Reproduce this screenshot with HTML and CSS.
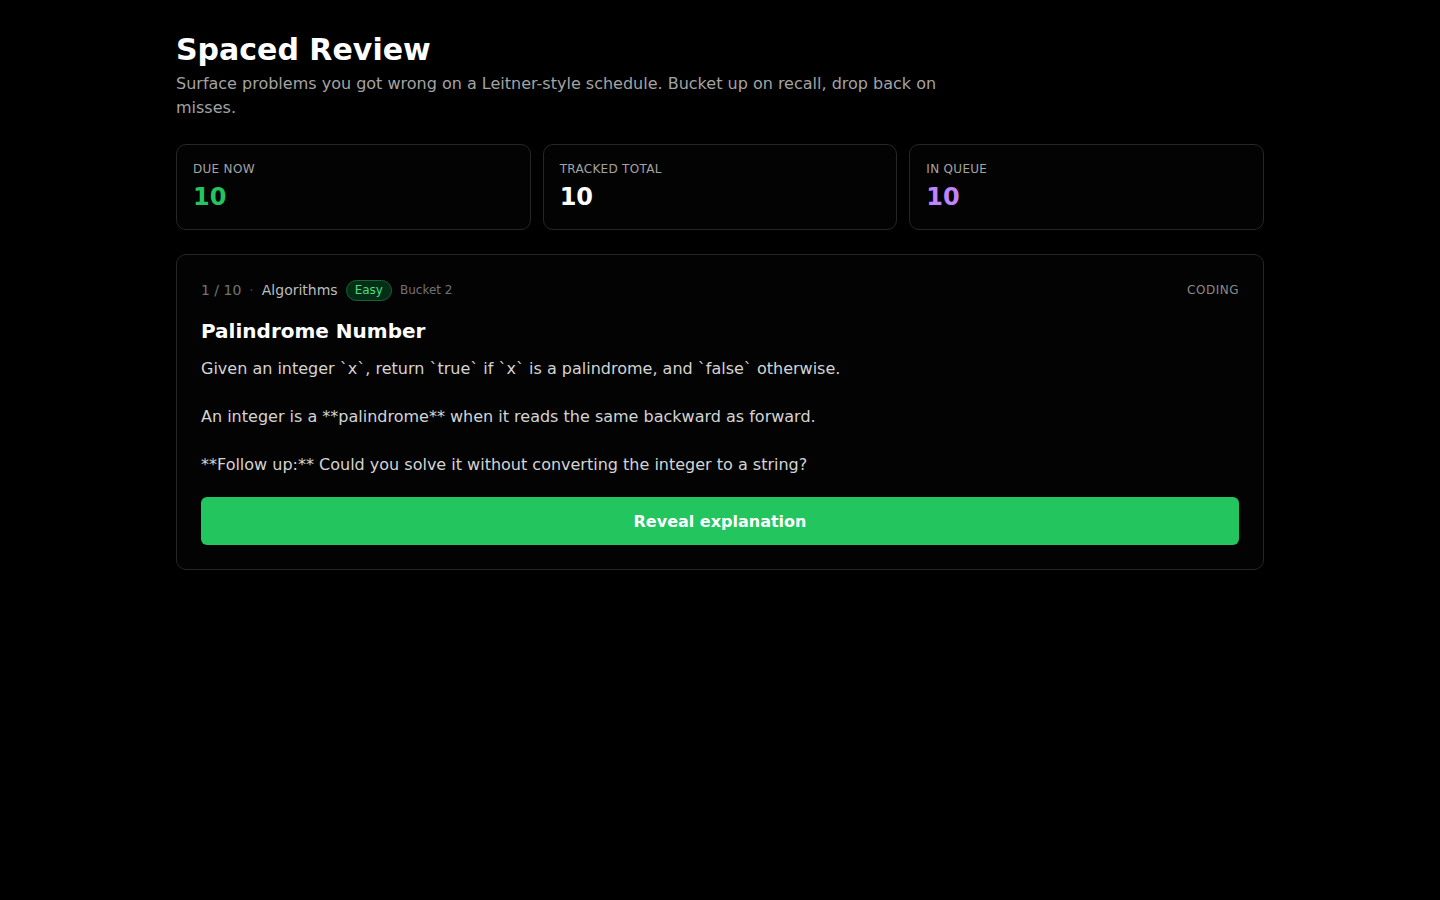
FILE: index.html
```html
<!DOCTYPE html>
<html lang="en">
<head>
    <meta charset="UTF-8">
    <meta name="viewport" content="width=device-width, initial-scale=1.0">
    <title>Spaced Review</title>
    <link rel="stylesheet" href="styles.css">
</head>
<body>

    <div class="page">
        <h1>Spaced Review</h1>
        <p class="intro">Surface problems you got wrong on a Leitner-style schedule. Bucket up on recall, drop back on misses.</p>

        <!-- compteurs -->
        <div class="stats">
            <div class="stat">
                <div class="stat-label">Due now</div>
                <div class="stat-value green">10</div>
            </div>
            <div class="stat">
                <div class="stat-label">Tracked total</div>
                <div class="stat-value">10</div>
            </div>
            <div class="stat">
                <div class="stat-label">In queue</div>
                <div class="stat-value purple">10</div>
            </div>
        </div>

        <div class="card">
            <div class="meta">
                <div class="meta-left">
                    <span class="counter">1 / 10</span>
                    <span class="dot">·</span>
                    <span class="topic">Algorithms</span>
                    <span class="badge">Easy</span>
                    <span class="bucket">Bucket 2</span>
                </div>
                <span class="kind">Coding</span>
            </div>

            <h2>Palindrome Number</h2>
            <div class="statement">Given an integer `x`, return `true` if `x` is a palindrome, and `false` otherwise.

An integer is a **palindrome** when it reads the same backward as forward.

**Follow up:** Could you solve it without converting the integer to a string?</div>

            <button class="reveal">Reveal explanation</button>
        </div>
    </div>

</body>
</html>
```

FILE: styles.css
```css
body {
    font-family: "DejaVu Sans", Verdana, sans-serif;
    margin: 0;
    padding: 0;
    background: #000;
    color: #fff;
}

.page {
    width: 1088px;
    margin: 0 auto;
    padding-top: 32px;
}

h1 {
    margin: 0;
    font-size: 30px;
    line-height: 36px;
    font-weight: bold;
}

.intro {
    margin: 4px 0 0;
    max-width: 768px;
    font-size: 16px;
    line-height: 24px;
    color: #a3a3a3;
}

.stats {
    display: grid;
    grid-template-columns: repeat(3, 1fr);
    gap: 12px;
    margin-top: 24px;
}

.stat {
    border: 1px solid #262626;
    border-radius: 10px;
    background: #030303;
    padding: 16px;
}

.stat-label {
    font-size: 12px;
    line-height: 16px;
    letter-spacing: 0.3px;
    text-transform: uppercase;
    color: #a3a3a3;
}

.stat-value {
    margin-top: 4px;
    font-size: 24px;
    line-height: 32px;
    font-weight: bold;
    color: #fff;
}

    .stat-value.green {
        color: #22c55e;
    }

    .stat-value.purple {
        color: #c084fc;
    }

.card {
    margin-top: 24px;
    border: 1px solid #262626;
    border-radius: 10px;
    background: #030303;
    padding: 24px;
}

.meta {
    display: flex;
    justify-content: space-between;
    align-items: center;
    height: 22px;
}

.meta-left {
    display: flex;
    align-items: center;
    gap: 8px;
    font-size: 14px;
}

.counter {
    color: #737373;
}

.dot {
    color: #404040;
}

.topic {
    color: #bdbdbd;
}

.badge {
    font-size: 12px;
    line-height: 19px;
    padding: 0 8px;
    border-radius: 999px;
    border: 1px solid #166534;
    background: #052e16;
    color: #4ade80;
}

.bucket {
    font-size: 12px;
    color: #737373;
}

.kind {
    font-size: 12px;
    letter-spacing: 0.5px;
    text-transform: uppercase;
    color: #8a8a8a;
}

h2 {
    margin: 16px 0 0;
    font-size: 20px;
    line-height: 28px;
    font-weight: bold;
}

.statement {
    margin-top: 12px;
    white-space: pre-wrap;
    font-size: 16px;
    line-height: 24px;
    color: #d4d4d4;
}

.reveal {
    display: block;
    width: 100%;
    height: 48px;
    margin-top: 20px;
    border: none;
    border-radius: 6px;
    background-color: #22c55e;
    color: #fff;
    font-family: inherit;
    font-size: 16px;
    font-weight: bold;
    cursor: pointer;
}

    .reveal:hover {
        background-color: #16a34a;
    }
```
